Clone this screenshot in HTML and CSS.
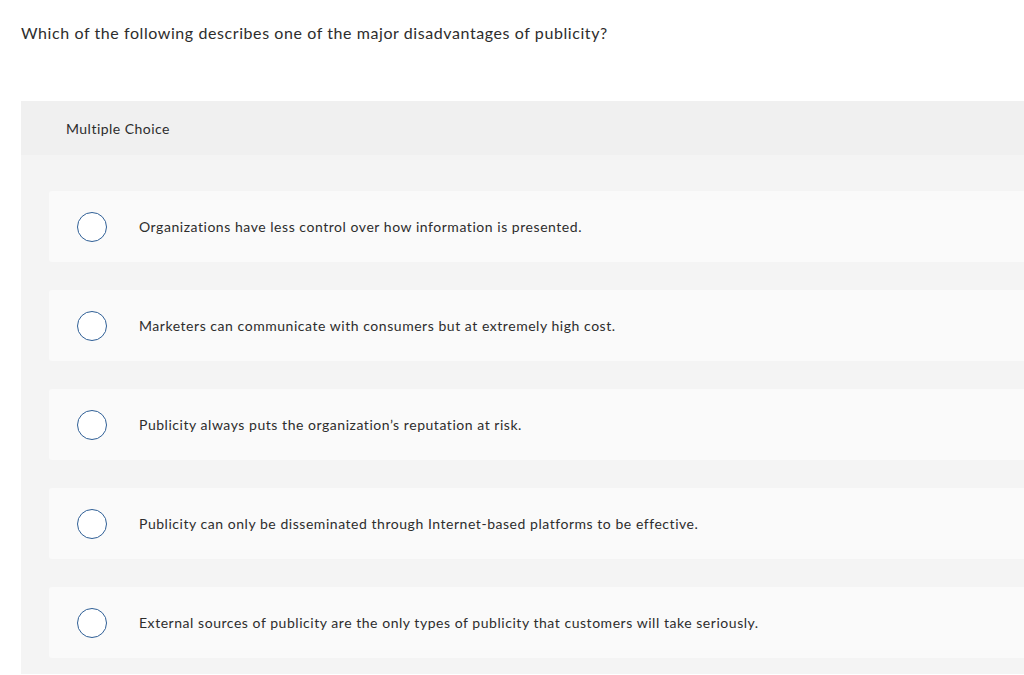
FILE: index.html
```html
<!DOCTYPE html>
<html>
<head>
<meta charset="utf-8">
<link rel="stylesheet" href="styles.css">
</head>
<body>
<div class="page">
  <p class="question">Which of the following describes one of the major disadvantages of publicity?</p>
  <div class="panel">
    <div class="panel-head">Multiple Choice</div>
    <div class="panel-body">
      <div class="option"><span class="radio"></span><span class="label">Organizations have less control over how information is presented.</span></div>
      <div class="option"><span class="radio"></span><span class="label">Marketers can communicate with consumers but at extremely high cost.</span></div>
      <div class="option"><span class="radio"></span><span class="label">Publicity always puts the organization’s reputation at risk.</span></div>
      <div class="option"><span class="radio"></span><span class="label">Publicity can only be disseminated through Internet-based platforms to be effective.</span></div>
      <div class="option"><span class="radio"></span><span class="label">External sources of publicity are the only types of publicity that customers will take seriously.</span></div>
    </div>
  </div>
</div>
</body>
</html>
```

FILE: styles.css
```css
html, body {
  margin: 0;
  padding: 0;
  background: #ffffff;
  overflow: hidden;
}
body {
  font-family: Lato, "Open Sans", sans-serif;
  color: #333333;
}
.page {
  padding: 0 0 0 21px;
}
.question {
  margin: 0;
  padding-top: 23px;
  height: 101px;
  box-sizing: border-box;
  font-size: 16px;
  line-height: 20px;
  letter-spacing: 0.58px;
  color: #2d2d2d;
}
.panel {
  background: #f4f4f4;
}
.panel-head {
  background: #f0f0f0;
  height: 54px;
  box-sizing: border-box;
  padding: 19px 0 0 45px;
  font-size: 14px;
  line-height: 18px;
  letter-spacing: 0.47px;
  color: #2d2d2d;
}
.panel-body {
  display: flex;
  flex-direction: column;
  gap: 28px;
  padding: 36px 0 16px 28px;
}
.option {
  display: flex;
  align-items: center;
  height: 71px;
  background: #fafafa;
  border-radius: 3px 0 0 3px;
}
.radio {
  flex: none;
  width: 28px;
  height: 28px;
  margin-left: 28px;
  border: 1px solid #2f5f96;
  border-radius: 50%;
  background: #ffffff;
}
.label {
  margin-left: 32px;
  font-size: 14px;
  line-height: 18px;
  letter-spacing: 0.54px;
  color: #2d2d2d;
}
```
